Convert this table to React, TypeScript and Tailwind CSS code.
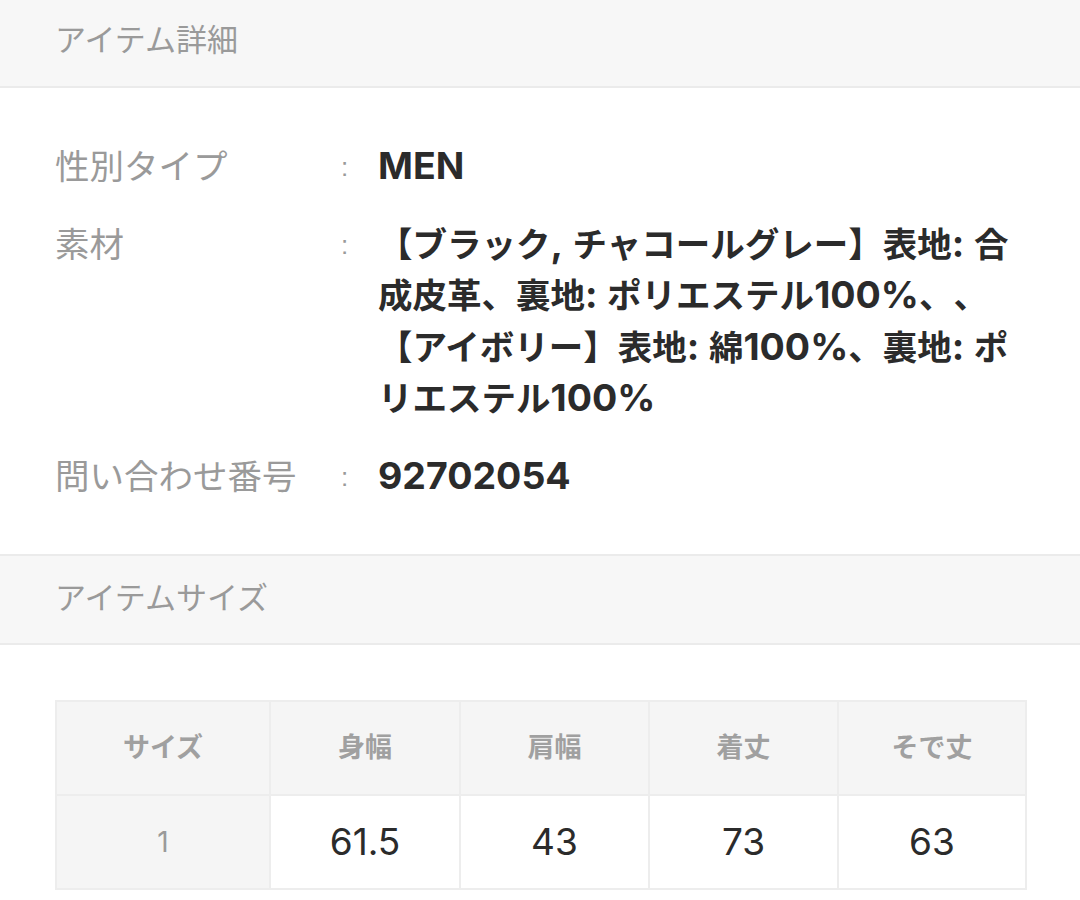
const font = "font-['Liberation_Sans','Noto_Sans_CJK_JP',sans-serif]";

const details = [
  { label: "性別タイプ", value: ["MEN"] },
  {
    label: "素材",
    value: [
      "【ブラック, チャコールグレー】表地: 合",
      "成皮革、裏地: ポリエステル100%、、",
      "【アイボリー】表地: 綿100%、裏地: ポ",
      "リエステル100%",
    ],
  },
  { label: "問い合わせ番号", value: ["92702054"] },
];

const heads = ["サイズ", "身幅", "肩幅", "着丈", "そで丈"];
const row = ["1", "61.5", "43", "73", "63"];
const widths = ["w-[214px]", "w-[190px]", "w-[189px]", "w-[189px]", "w-[188px]"];

// latin runs are set a bit larger, like the reference's system font
const Mixed = ({ text }: { text: string }) => (
  <span className="block whitespace-nowrap">
    {text.split(/([A-Za-z0-9%.,:]+)/).map((s, i) =>
      i % 2 ? (
        <span
          key={i}
          className="font-['Inter','Liberation_Sans',sans-serif] text-[37.5px] leading-none"
        >
          {s}
        </span>
      ) : (
        <span key={i}>{s}</span>
      )
    )}
  </span>
);

const App = () => {
  return (
    <div className={`${font} w-[1080px] bg-white [text-spacing-trim:space-all]`}>
      {/* ITEM DETAILS */}
      <div className="h-[88px] bg-[#f7f7f7] border-b-2 border-[#ebebeb] flex items-center px-[55px]">
        <h2 className="text-[31px] text-[#9a9a9a] -mt-1">アイテム詳細</h2>
      </div>
      <div className="px-[55px] pt-[54px] pb-[51px] flex flex-col gap-[26px]">
        {details.map((d) => (
          <div className="flex leading-[51.5px]" key={d.label}>
            <div className="w-[286px] shrink-0 text-[34.5px] text-[#9a9a9a]">
              {d.label}
            </div>
            <div className="w-[37px] shrink-0 text-[26px] text-[#9a9a9a]">:</div>
            <div className="w-[660px] text-[34.5px] font-bold text-[#2b2b2b]">
              {d.value.map((line) => (
                <Mixed key={line} text={line} />
              ))}
            </div>
          </div>
        ))}
      </div>

      {/* ITEM SIZE */}
      <div className="h-[91px] bg-[#f7f7f7] border-y-2 border-[#ebebeb] flex items-center px-[55px]">
        <h2 className="text-[31px] text-[#9a9a9a]">アイテムサイズ</h2>
      </div>
      <div className="px-[55px] pt-[55px] pb-[20px]">
        <table className="border-collapse border-2 border-[#ededed] table-fixed w-[970px]">
          <thead>
            <tr>
              {heads.map((h, i) => (
                <th
                  key={h}
                  className={`${widths[i]} h-[94px] bg-[#f5f5f5] border-2 border-[#ededed] text-[27px] font-bold text-[#a0a0a0] text-center`}
                >
                  {h}
                </th>
              ))}
            </tr>
          </thead>
          <tbody>
            <tr>
              {row.map((v, i) => (
                <td
                  key={i}
                  className={
                    i === 0
                      ? "h-[94px] bg-[#f5f5f5] border-2 border-[#ededed] font-['Inter',sans-serif] text-[28px] text-[#9a9a9a] text-center"
                      : "h-[94px] bg-white border-2 border-[#ededed] font-['Inter',sans-serif] text-[37px] text-[#2b2b2b] text-center"
                  }
                >
                  {v}
                </td>
              ))}
            </tr>
          </tbody>
        </table>
      </div>
    </div>
  );
};

export default App;
